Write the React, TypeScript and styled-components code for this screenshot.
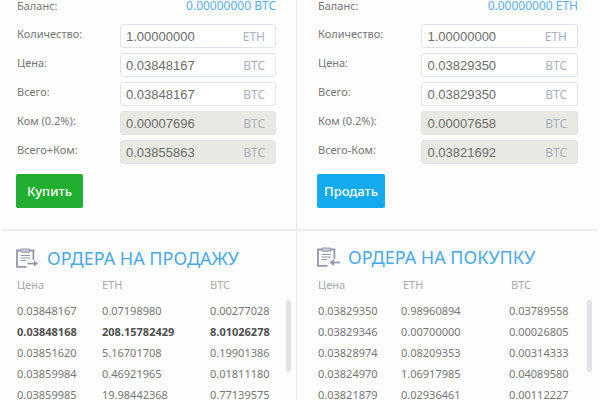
import React, { useId } from "react";
import styled, { createGlobalStyle } from "styled-components";

const GlobalStyle = createGlobalStyle`
  * { box-sizing: border-box; }
  html, body { margin: 0; background: #fdfdfd; overflow: hidden; }
  body { font-family: "Noto Sans", "Open Sans", sans-serif; color: #777; }
`;

const Page = styled.main`
  display: grid;
  grid-template-columns: minmax(0, 295fr) minmax(0, 300fr);
  padding: 0 3px 0 2px;
`;

const Panel = styled.section<{ $side: Side }>`
  padding: ${(p) => (p.$side === "buy" ? "0 20px 0 14px" : "0 19px 0 20px")};
  border-right: ${(p) => (p.$side === "buy" ? "1px solid #e9e9ec" : "0")};
`;

const FormPanel = styled(Panel)`
  height: 231px;
  border-bottom: 2px solid #eeeeee;
`;

const OrdersPanel = styled(Panel)`
  padding-right: 5px;
  padding-top: 15px;
`;

const Balance = styled.div`
  display: flex;
  justify-content: space-between;
  height: 24px;
  padding-left: 1px;
  font-size: 11px;
  line-height: 12px;
`;

const BalanceValue = styled.span`
  color: #5aaeea;
  font-size: 12px;
`;

const Fields = styled.form`
  display: flex;
  flex-direction: column;
  align-items: flex-start;
  gap: 5px;
`;

const Row = styled.div`
  display: flex;
  justify-content: space-between;
  width: 100%;
`;

const Label = styled.label`
  padding-left: 1px;
  font-size: 11px;
  line-height: 19px;
  white-space: nowrap;
`;

const Box = styled.span<{ $locked: boolean }>`
  display: flex;
  align-items: center;
  width: 60%;
  height: 24px;
  padding: 0 10px 0 5px;
  border: 1px solid ${(p) => (p.$locked ? "#e2e3e4" : "#dfe3ec")};
  border-radius: 3px;
  background: ${(p) => (p.$locked ? "#e9e9e3" : "#fff")};
`;

const Amount = styled.input`
  flex: 1;
  min-width: 0;
  padding: 0;
  border: 0;
  outline: 0;
  background: transparent;
  color: #6c6c6c;
  font: 13px "Liberation Sans", Arial, sans-serif;
`;

const Unit = styled.span`
  color: #a9afbf;
  font-size: 12px;
`;

const Submit = styled.button<{ $side: Side }>`
  height: 34px;
  margin-top: 5px;
  padding: 0 ${(p) => (p.$side === "buy" ? "11px" : "7px")};
  border: 0;
  border-radius: 2px;
  background: ${(p) => (p.$side === "buy" ? "#22ae31" : "#14aaf0")};
  color: #fff;
  font: 500 13px "Noto Sans", sans-serif;
`;

const Heading = styled.h2<{ $side: Side }>`
  display: flex;
  align-items: center;
  gap: 8px;
  height: 24px;
  margin: 0;
  padding-bottom: ${(p) => (p.$side === "buy" ? "0" : "2px")};
  color: #4aa9e9;
  font-size: 18px;
  font-weight: 400;
  line-height: 22px;
  white-space: nowrap;
`;

const List = styled.div`
  display: flex;
  align-items: flex-start;
`;

const Orders = styled.table`
  flex: 1;
  width: 100%;
  min-width: 0;
  border-collapse: collapse;
  table-layout: fixed;
  font-size: 11px;
  text-align: left;
`;

const Head = styled.th<{ $inset?: boolean; $width?: string }>`
  width: ${(p) => p.$width ?? "auto"};
  height: 30px;
  padding: 0 0 0 ${(p) => (p.$inset ? "3px" : "1px")};
  color: #aaa;
  font-weight: 400;
  line-height: 16px;
`;

const Cell = styled.td<{ $strong?: boolean }>`
  height: 21px;
  padding: 0 0 0 1px;
  color: ${(p) => (p.$strong ? "#4f4f4f" : "#777")};
  font-weight: ${(p) => (p.$strong ? 700 : 400)};
  line-height: 16px;
`;

const Thumb = styled.div`
  flex: none;
  width: 5px;
  height: 72px;
  margin-top: 30px;
  border-radius: 2px;
  background: #e1e2ea;
`;

type Side = "buy" | "sell";

interface Deal {
  side: Side;
  balance: string;
  fields: [string, string, string, boolean][];
  action: string;
}

interface Book {
  side: Side;
  title: string;
  strong?: number;
  widths: [string, string];
  rows: string[][];
}

const deals: Deal[] = [
  {
    side: "buy",
    balance: "0.00000000 BTC",
    action: "Купить",
    fields: [
      ["Количество:", "1.00000000", "ETH", false],
      ["Цена:", "0.03848167", "BTC", false],
      ["Всего:", "0.03848167", "BTC", false],
      ["Ком (0.2%):", "0.00007696", "BTC", true],
      ["Всего+Ком:", "0.03855863", "BTC", true],
    ],
  },
  {
    side: "sell",
    balance: "0.00000000 ETH",
    action: "Продать",
    fields: [
      ["Количество:", "1.00000000", "ETH", false],
      ["Цена:", "0.03829350", "BTC", false],
      ["Всего:", "0.03829350", "BTC", false],
      ["Ком (0.2%):", "0.00007658", "BTC", true],
      ["Всего-Ком:", "0.03821692", "BTC", true],
    ],
  },
];

const books: Book[] = [
  {
    side: "buy",
    title: "ОРДЕРА НА ПРОДАЖУ",
    strong: 1,
    widths: ["85px", "108px"],
    rows: [
      ["0.03848167", "0.07198980", "0.00277028"],
      ["0.03848168", "208.15782429", "8.01026278"],
      ["0.03851620", "5.16701708", "0.19901386"],
      ["0.03859984", "0.46921965", "0.01811180"],
      ["0.03859985", "19.98442368", "0.77139575"],
    ],
  },
  {
    side: "sell",
    title: "ОРДЕРА НА ПОКУПКУ",
    widths: ["83px", "108px"],
    rows: [
      ["0.03829350", "0.98960894", "0.03789558"],
      ["0.03829346", "0.00700000", "0.00026805"],
      ["0.03828974", "0.08209353", "0.00314333"],
      ["0.03824970", "1.06917985", "0.04089580"],
      ["0.03821879", "0.02936461", "0.00112227"],
    ],
  },
];

const ClipboardIcon = ({ side }: { side: Side }) => (
  <svg width="23" height="20" viewBox="0 0 23 20" fill="none" stroke="#9299a9" strokeWidth="1.8" aria-hidden="true">
    <path d="M17.4 12V2.5H1V18.8H10.5" />
    <path d="M5 1H13.5V4.2H5Z" fill="#c9ccd5" strokeWidth="1" />
    <path d="M4.5 7.5H14M4.5 10H14M4.5 12.5H10" strokeWidth="1.1" />
    {side === "buy" ? (
      <>
        <path d="M11.5 15.5H20" />
        <path d="M18 12.5L22 15.5L18 18.5Z" fill="#9299a9" stroke="none" />
      </>
    ) : (
      <>
        <path d="M15 15.5H23" />
        <path d="M17 12L12.5 15.5L17 19Z" fill="#9299a9" stroke="none" />
      </>
    )}
  </svg>
);

function Field({ label, value, unit, locked }: { label: string; value: string; unit: string; locked: boolean }) {
  const id = useId();
  return (
    <Row>
      <Label htmlFor={id}>{label}</Label>
      <Box $locked={locked}>
        <Amount id={id} defaultValue={value} readOnly={locked} />
        <Unit>{unit}</Unit>
      </Box>
    </Row>
  );
}

export default function App() {
  return (
    <>
      <GlobalStyle />
      <Page>
        {deals.map((deal) => (
          <FormPanel key={deal.side} $side={deal.side}>
            <Balance>
              <span>Баланс:</span>
              <BalanceValue>{deal.balance}</BalanceValue>
            </Balance>
            <Fields onSubmit={(e) => e.preventDefault()}>
              {deal.fields.map(([label, value, unit, locked]) => (
                <Field key={label} label={label} value={value} unit={unit} locked={locked} />
              ))}
              <Submit $side={deal.side}>{deal.action}</Submit>
            </Fields>
          </FormPanel>
        ))}
        {books.map((book) => (
          <OrdersPanel key={book.side} $side={book.side}>
            <Heading $side={book.side}>
              <ClipboardIcon side={book.side} />
              {book.title}
            </Heading>
            <List>
              <Orders>
                <thead>
                  <tr>
                    <Head $width={book.widths[0]}>Цена</Head>
                    <Head $inset={book.side === "sell"} $width={book.widths[1]}>ETH</Head>
                    <Head $inset={book.side === "sell"}>BTC</Head>
                  </tr>
                </thead>
                <tbody>
                  {book.rows.map((row, i) => (
                    <tr key={row[0]}>
                      {row.map((text, j) => (
                        <Cell key={j} $strong={i === book.strong}>{text}</Cell>
                      ))}
                    </tr>
                  ))}
                </tbody>
              </Orders>
              <Thumb />
            </List>
          </OrdersPanel>
        ))}
      </Page>
    </>
  );
}
